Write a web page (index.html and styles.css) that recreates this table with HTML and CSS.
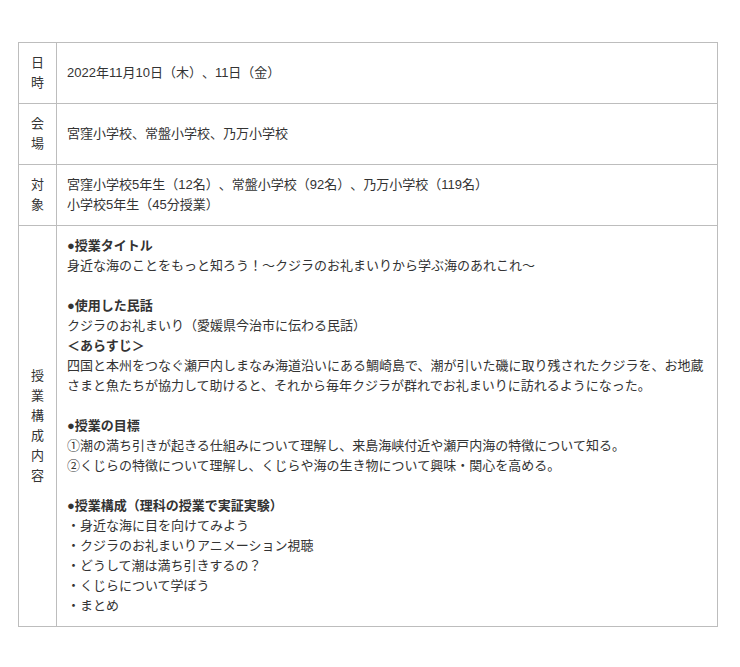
FILE: index.html
```html
<!DOCTYPE html>
<html lang="ja">
<head>
    <meta charset="UTF-8">
    <meta name="viewport" content="width=device-width, initial-scale=1.0">
    <title>授業概要</title>
    <link rel="stylesheet" href="styles.css">
</head>
<body>
    <!-- Lesson outline table -->
    <table class="outline">
        <tr>
            <th class="label">日時</th>
            <td class="value">2022年11月10日（木）、11日（金）</td>
        </tr>
        <tr>
            <th class="label">会場</th>
            <td class="value">宮窪小学校、常盤小学校、乃万小学校</td>
        </tr>
        <tr>
            <th class="label">対象</th>
            <td class="value">宮窪小学校5年生（12名）、常盤小学校（92名）、乃万小学校（119名）<br>小学校5年生（45分授業）</td>
        </tr>
        <tr>
            <th class="label">授業構成内容</th>
            <td class="value">
                <b>●授業タイトル</b><br>
                身近な海のことをもっと知ろう！～クジラのお礼まいりから学ぶ海のあれこれ〜<br>
                <br>
                <b>●使用した民話</b><br>
                クジラのお礼まいり（愛媛県今治市に伝わる民話）<br>
                <b>＜あらすじ＞</b><br>
                四国と本州をつなぐ瀬戸内しまなみ海道沿いにある鯛崎島で、潮が引いた磯に取り残されたクジラを、お地蔵さまと魚たちが協力して助けると、それから毎年クジラが群れでお礼まいりに訪れるようになった。<br>
                <br>
                <b>●授業の目標</b><br>
                ①潮の満ち引きが起きる仕組みについて理解し、来島海峡付近や瀬戸内海の特徴について知る。<br>
                ②くじらの特徴について理解し、くじらや海の生き物について興味・関心を高める。<br>
                <br>
                <b>●授業構成（理科の授業で実証実験）</b><br>
                ・身近な海に目を向けてみよう<br>
                ・クジラのお礼まいりアニメーション視聴<br>
                ・どうして潮は満ち引きするの？<br>
                ・くじらについて学ぼう<br>
                ・まとめ
            </td>
        </tr>
    </table>
</body>
</html>
```

FILE: styles.css
```css
/* Page */
body {
    margin: 0;
    padding: 42px 0 0 18px;
    background: #fff;
    font-family: "Liberation Sans", "Noto Sans CJK JP", sans-serif;
    font-size: 13px;
    line-height: 20px;
    color: #333;
    text-spacing-trim: space-all;
}

/* Outline table */
.outline {
    width: 700px;
    border-collapse: collapse;
    border: 1px solid #bdbdbd;
}

.outline th,
.outline td {
    border: 1px solid #bdbdbd;
    padding: 10px;
    vertical-align: middle;
    text-align: left;
}

/* Narrow label column, one character per line */
.label {
    width: 17px;
    font-weight: normal;
    word-break: break-all;
    text-align: center !important;
}

.value b {
    font-weight: bold;
}
```
